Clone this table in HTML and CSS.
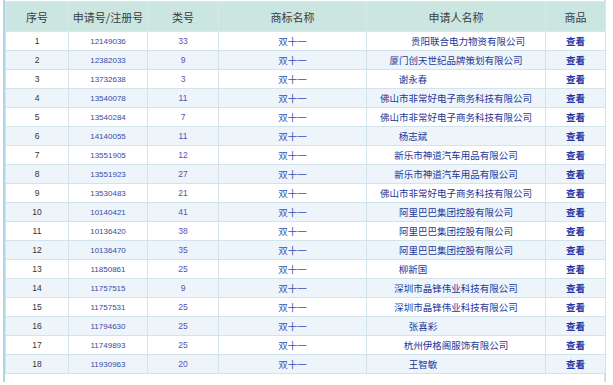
FILE: index.html
```html
<!DOCTYPE html>
<html lang="zh">
<head>
<meta charset="utf-8">
<title>商标列表</title>
<link rel="stylesheet" href="styles.css">
</head>
<body>
<div class="frame">
<table class="grid">
<thead>
<tr><th class="c1">序号</th><th class="c2">申请号/注册号</th><th class="c3">类号</th><th class="c4">商标名称</th><th class="c5">申请人名称</th><th class="c6">商品</th></tr>
</thead>
<tbody>
<tr><td class="idx">1</td><td class="num">12149036</td><td class="cls">33</td><td class="name">双十一</td><td class="app shift">贵阳联合电力物资有限公司</td><td class="view">查看</td></tr>
<tr><td class="idx">2</td><td class="num">12382033</td><td class="cls">9</td><td class="name">双十一</td><td class="app">厦门创天世纪品牌策划有限公司</td><td class="view">查看</td></tr>
<tr><td class="idx">3</td><td class="num">13732638</td><td class="cls">3</td><td class="name">双十一</td><td class="app short">谢永春</td><td class="view">查看</td></tr>
<tr><td class="idx">4</td><td class="num">13540078</td><td class="cls">11</td><td class="name">双十一</td><td class="app">佛山市非常好电子商务科技有限公司</td><td class="view">查看</td></tr>
<tr><td class="idx">5</td><td class="num">13540284</td><td class="cls">7</td><td class="name">双十一</td><td class="app">佛山市非常好电子商务科技有限公司</td><td class="view">查看</td></tr>
<tr><td class="idx">6</td><td class="num">14140055</td><td class="cls">11</td><td class="name">双十一</td><td class="app short">杨志斌</td><td class="view">查看</td></tr>
<tr><td class="idx">7</td><td class="num">13551905</td><td class="cls">12</td><td class="name">双十一</td><td class="app">新乐市神道汽车用品有限公司</td><td class="view">查看</td></tr>
<tr><td class="idx">8</td><td class="num">13551923</td><td class="cls">27</td><td class="name">双十一</td><td class="app">新乐市神道汽车用品有限公司</td><td class="view">查看</td></tr>
<tr><td class="idx">9</td><td class="num">13530483</td><td class="cls">21</td><td class="name">双十一</td><td class="app">佛山市非常好电子商务科技有限公司</td><td class="view">查看</td></tr>
<tr><td class="idx">10</td><td class="num">10140421</td><td class="cls">41</td><td class="name">双十一</td><td class="app">阿里巴巴集团控股有限公司</td><td class="view">查看</td></tr>
<tr><td class="idx">11</td><td class="num">10136420</td><td class="cls">38</td><td class="name">双十一</td><td class="app">阿里巴巴集团控股有限公司</td><td class="view">查看</td></tr>
<tr><td class="idx">12</td><td class="num">10136470</td><td class="cls">35</td><td class="name">双十一</td><td class="app">阿里巴巴集团控股有限公司</td><td class="view">查看</td></tr>
<tr><td class="idx">13</td><td class="num">11850861</td><td class="cls">25</td><td class="name">双十一</td><td class="app short">柳新国</td><td class="view">查看</td></tr>
<tr><td class="idx">14</td><td class="num">11757515</td><td class="cls">9</td><td class="name">双十一</td><td class="app">深圳市晶锋伟业科技有限公司</td><td class="view">查看</td></tr>
<tr><td class="idx">15</td><td class="num">11757531</td><td class="cls">25</td><td class="name">双十一</td><td class="app">深圳市晶锋伟业科技有限公司</td><td class="view">查看</td></tr>
<tr><td class="idx">16</td><td class="num">11794630</td><td class="cls">25</td><td class="name">双十一</td><td class="app mid">张喜彩</td><td class="view">查看</td></tr>
<tr><td class="idx">17</td><td class="num">11749893</td><td class="cls">25</td><td class="name">双十一</td><td class="app">杭州伊格阁服饰有限公司</td><td class="view">查看</td></tr>
<tr><td class="idx">18</td><td class="num">11930963</td><td class="cls">20</td><td class="name">双十一</td><td class="app mid">王智敏</td><td class="view">查看</td></tr>
</tbody>
</table>
</div>
</body>
</html>
```

FILE: styles.css
```css
html, body {
  margin: 0;
  padding: 0;
  background: #ffffff;
}
body {
  font-family: "Noto Sans CJK SC", "DejaVu Sans", sans-serif;
  font-size: 9.5px;
  color: #333333;
}
.frame {
  margin-left: 3px;
  width: 596px;
  padding: 1px 3px 8px 0;
  border-left: 2px solid #b3d4e4;
  border-right: 2px solid #c9e0ea;
}
.grid {
  width: 594px;
  border-collapse: collapse;
  table-layout: fixed;
}
.grid th {
  height: 29px;
  padding: 0;
  background: #cbe5e0;
  color: #3c3c3c;
  font-weight: normal;
  font-size: 11px;
  text-align: center;
  border: 1px solid #d6e8ea;
}
.c1 { width: 62px; }
.c2 { width: 78px; }
.c3 { width: 70px; }
.c4 { width: 147px; }
.c5 { width: 178px; }
.c6 { width: 59px; }
.grid td {
  height: 18px;
  padding: 0;
  text-align: center;
  border: 1px solid #d3e3ec;
  font-size: 9.5px;
  white-space: nowrap;
}
.grid tbody tr:nth-child(odd) td { background: #ffffff; }
.grid tbody tr:nth-child(even) td { background: #edf5fb; }
.idx { color: #333333; font-family: "Liberation Sans", sans-serif; font-size: 8.5px !important; }
.num { color: #3a48a8; font-family: "Liberation Sans", sans-serif; font-size: 8px !important; }
.cls { color: #5a4fb0; font-family: "Liberation Sans", sans-serif; font-size: 8.5px !important; }
.name { color: #3850b0; }
.app { color: #24379a; }
.app.shift { padding-left: 24px; }
.app.short { padding-right: 86px; }
.app.mid { padding-right: 66px; }
.view { color: #1f3ba8; font-weight: bold; }
```
